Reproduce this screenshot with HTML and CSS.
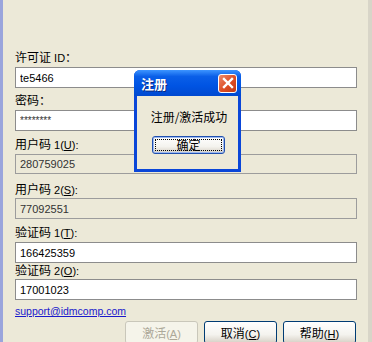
FILE: index.html
```html
<!DOCTYPE html>
<html lang="zh-CN">
<head>
<meta charset="UTF-8" />
<title>注册</title>
<link rel="stylesheet" href="styles.css">
</head>
<body>

<div class="window">
  <form class="reg-form">
    <label class="lbl lbl-first"><span class="zh">许可证</span> ID<span class="zh">：</span></label>
    <input class="field" type="text" value="te5466">

    <label class="lbl lbl-gap5"><span class="zh">密码：</span></label>
    <input class="field field-pw" type="text" value="********">

    <label class="lbl lbl-gap6"><span class="zh">用户码</span> 1(<u>U</u>):</label>
    <input class="field field-ro" type="text" value="280759025" readonly>

    <label class="lbl lbl-gap8"><span class="zh">用户码</span> 2(<u>S</u>):</label>
    <input class="field field-ro field-tight" type="text" value="77092551" readonly>

    <label class="lbl lbl-gap6"><span class="zh">验证码</span> 1(<u>T</u>):</label>
    <input class="field" type="text" value="166425359">

    <label class="lbl lbl-gap0"><span class="zh">验证码</span> 2(<u>O</u>):</label>
    <input class="field field-tight" type="text" value="17001023">

    <a class="support" href="#">support@idmcomp.com</a>

    <div class="actions">
      <button type="button" class="btn" disabled><span class="zh">激活</span>(<u>A</u>)</button>
      <button type="button" class="btn"><span class="zh">取消</span>(<u>C</u>)</button>
      <button type="button" class="btn"><span class="zh">帮助</span>(<u>H</u>)</button>
    </div>
  </form>
</div>

<!-- message box on top of the form -->
<div class="msgbox">
  <div class="msgbox-title">
    <span class="msgbox-caption">注册</span>
    <span class="msgbox-close">
      <svg width="12" height="12" viewBox="0 0 12 12">
        <path d="M2 2 L10 10 M10 2 L2 10" stroke="#fff" stroke-width="2.4" stroke-linecap="square" />
      </svg>
    </span>
  </div>
  <div class="msgbox-body">
    <p class="msgbox-text">注册/激活成功</p>
    <button type="button" class="btn btn-ok">确定</button>
  </div>
</div>

</body>
</html>
```

FILE: styles.css
```css
body {
  margin: 0;
  background: #ece9d8;
  font-family: Tahoma, "Liberation Sans", "Noto Sans CJK SC", sans-serif;
  font-size: 11px;
  color: #000;
}
.zh {
  font-family: "Noto Sans CJK SC", sans-serif;
  font-size: 12px;
}
.window {
  height: 342px;
  border-left: 3px solid #9aa5dc;
  border-right: 4px solid #d8d5c8;
  box-sizing: border-box;
  overflow: hidden;
}
.reg-form {
  display: flex;
  flex-direction: column;
  width: 342px;
  margin-left: 12px;
  padding-top: 50px;
}
.lbl {
  display: block;
  height: 14px;
  line-height: 14px;
  margin-bottom: 3px;
}
.lbl-gap0 { margin-top: 0; margin-bottom: 2px; }
.lbl-gap5 { margin-top: 5px; }
.lbl-gap6 { margin-top: 6px; }
.lbl-gap8 { margin-top: 8px; margin-bottom: 2px; }
.field {
  box-sizing: border-box;
  height: 21px;
  width: 342px;
  margin: 0;
  padding: 0 4px;
  border: 1px solid #8c8c8c;
  background: #fff;
  font-family: Tahoma, "Liberation Sans", sans-serif;
  font-size: 11px;
  color: #000;
  outline: none;
}
.field-pw {
  font-size: 10px;
  color: #333;
}
.field-ro {
  height: 20px;
  background: #ece9d8;
  border-color: #9c9c9c;
  color: #333;
}
.field-tight {
  height: 21px;
}
.support {
  margin-top: 4px;
  line-height: 14px;
  height: 14px;
  font-size: 10.5px;
  color: #1a1acc;
  align-self: flex-start;
}
.actions {
  display: flex;
  justify-content: flex-end;
  gap: 6px;
  margin-top: 3px;
  margin-right: 1px;
}
.btn {
  width: 73px;
  height: 23px;
  padding: 0;
  border: 1px solid #003c74;
  border-radius: 3px;
  background: linear-gradient(#ffffff, #f4f3ee 60%, #d6d0c5);
  font-family: Tahoma, "Liberation Sans", sans-serif;
  font-size: 11px;
  color: #000;
}
.btn:disabled {
  border-color: #c9c7ba;
  background: #f5f4ea;
  color: #aca899;
}
.btn u {
  text-decoration: underline;
}

/* message box */
.msgbox {
  position: absolute;
  left: 134px;
  top: 70px;
  width: 107px;
  height: 102px;
  box-sizing: border-box;
  background: #0a46d8;
  border-radius: 6px 6px 0 0;
  padding: 0 3px 3px 3px;
  display: flex;
  flex-direction: column;
}
.msgbox-title {
  height: 26px;
  display: flex;
  align-items: center;
  justify-content: space-between;
  margin: 0 -3px;
  padding: 0 4px 0 7px;
  border-radius: 6px 6px 0 0;
  background: linear-gradient(#3d95ff, #0a5fe8 25%, #0054e3 60%, #0049d0);
}
.msgbox-caption {
  color: #fff;
  font-family: "Noto Sans CJK SC", sans-serif;
  font-weight: bold;
  font-size: 13px;
  text-shadow: 1px 1px 0 #0a2a80;
}
.msgbox-close {
  width: 19px;
  height: 19px;
  box-sizing: border-box;
  border: 1px solid #fff;
  border-radius: 3px;
  background: linear-gradient(135deg, #ec8b6d, #dd4d24 55%, #c13a17);
  display: flex;
  align-items: center;
  justify-content: center;
}
.msgbox-body {
  flex: 1;
  background: #ece9d8;
  display: flex;
  flex-direction: column;
  align-items: center;
}
.msgbox-text {
  margin: 13px 0 0 3px;
  font-family: "Noto Sans CJK SC", sans-serif;
  font-size: 12px;
  line-height: 16px;
}
.btn-ok {
  width: 73px;
  height: 18px;
  margin-top: 11px;
  margin-left: 2px;
  border-color: #2050b0;
  box-shadow: inset 0 0 0 1px #9cb8ee;
  outline: 1px dotted #000;
  outline-offset: -4px;
  font-family: "Noto Sans CJK SC", sans-serif;
  font-size: 12px;
  line-height: 14px;
}
```
